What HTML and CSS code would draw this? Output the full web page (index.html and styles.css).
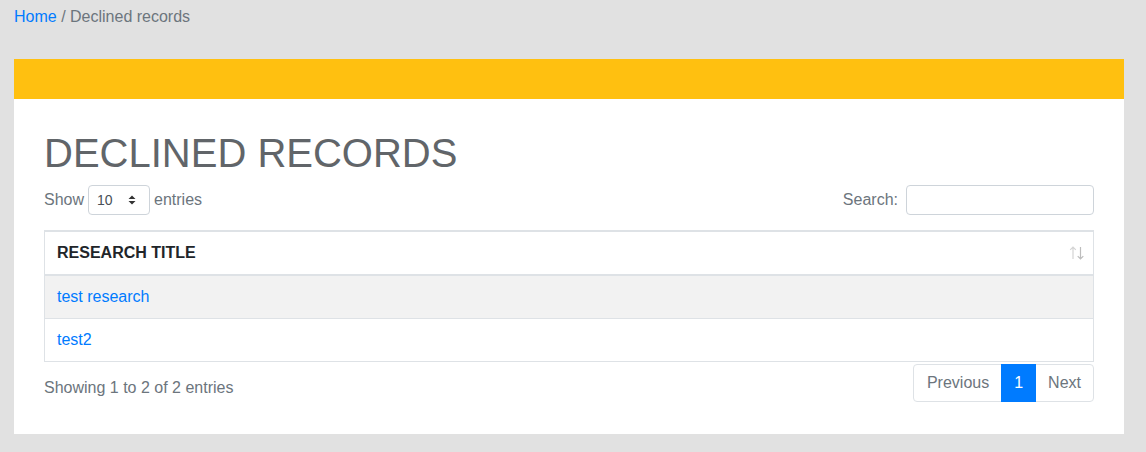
FILE: index.html
```html
<!DOCTYPE html>
<html>
<head>
<meta charset="utf-8">
<link rel="stylesheet" href="styles.css">
</head>
<body>
<div class="page">
  <nav class="crumbs"><a href="#" class="crumb-link">Home</a> / Declined records</nav>
  <section class="card">
    <div class="card-head"></div>
    <div class="card-body">
      <h1 class="title">DECLINED RECORDS</h1>
      <div class="controls">
        <label class="length">Show
          <span class="select"><span class="select-val">10</span>
            <svg class="select-arrows" width="8" height="10" viewBox="0 0 8 10"><path d="M4 0.5 L7.5 4 L0.5 4 Z M4 9.5 L7.5 6 L0.5 6 Z" fill="#333"/></svg>
          </span>
          entries</label>
        <label class="search">Search: <span class="search-input"></span></label>
      </div>
      <table class="grid">
        <thead>
          <tr><th class="th">RESEARCH TITLE
            <svg class="sort" width="16" height="16" viewBox="0 0 16 16"><path d="M4 2 V14 M1.2 4.8 L4 2 L6.8 4.8" stroke="#d4d4d4" stroke-width="1.2" fill="none"/><path d="M11.5 2 V14 M8.7 11.2 L11.5 14 L14.3 11.2" stroke="#bdbdbd" stroke-width="1.2" fill="none"/></svg>
          </th></tr>
        </thead>
        <tbody>
          <tr class="row odd"><td class="td"><a href="#" class="cell-link">test research</a></td></tr>
          <tr class="row"><td class="td"><a href="#" class="cell-link">test2</a></td></tr>
        </tbody>
      </table>
      <div class="footer">
        <div class="info">Showing 1 to 2 of 2 entries</div>
        <ul class="pager">
          <li class="page-item first">Previous</li>
          <li class="page-item active">1</li>
          <li class="page-item last">Next</li>
        </ul>
      </div>
    </div>
  </section>
</div>
</body>
</html>
```
FILE: styles.css
```css
html, body {
  margin: 0;
  padding: 0;
  background: #e1e1e1;
  font-family: "Liberation Sans", Arial, sans-serif;
  font-size: 16px;
  line-height: 24px;
  color: #6c757d;
}
.page {
  padding: 5px 22px 18px 14px;
}
.crumbs {
  color: #6c757d;
  height: 24px;
}
.crumb-link {
  color: #007bff;
  text-decoration: none;
}
.card {
  margin-top: 30px;
  background: #fff;
  width: 1110px;
}
.card-head {
  height: 40px;
  background: #ffc010;
}
.card-body {
  padding: 30px 30px 32px 30px;
}
.title {
  margin: 0 0 8px 0;
  font-size: 40px;
  line-height: 48px;
  font-weight: normal;
  color: #616569;
}
.controls {
  display: flex;
  justify-content: space-between;
  align-items: center;
  height: 30px;
  margin-bottom: 15px;
}
.length, .search {
  display: flex;
  align-items: center;
  gap: 4px;
  color: #6c757d;
}
.search {
  gap: 8px;
}
.select {
  box-sizing: border-box;
  width: 62px;
  height: 30px;
  border: 1px solid #ced4da;
  border-radius: 4px;
  display: flex;
  align-items: center;
  justify-content: space-between;
  padding: 0 13px 0 8px;
  font-size: 14px;
  color: #495057;
}
.select-arrows {
  display: block;
}
.search-input {
  box-sizing: border-box;
  width: 188px;
  height: 30px;
  border: 1px solid #ced4da;
  border-radius: 4px;
  display: block;
}
.grid {
  width: 100%;
  border-collapse: collapse;
}
.th {
  position: relative;
  text-align: left;
  padding: 9px 12px;
  border: 1px solid #dee2e6;
  border-top-width: 2px;
  border-bottom-width: 2px;
  color: #212529;
  font-weight: bold;
}
.sort {
  position: absolute;
  right: 8px;
  top: 13px;
}
.td {
  padding: 9px 12px;
  border: 1px solid #dee2e6;
  border-top: 0;
}
.odd {
  background: #f2f2f2;
}
.cell-link {
  color: #007bff;
  text-decoration: none;
}
.footer {
  display: flex;
  justify-content: space-between;
  align-items: flex-start;
}
.info {
  padding-top: 14px;
  color: #6c757d;
}
.pager {
  display: flex;
  list-style: none;
  margin: 2px 0 0 0;
  padding: 0;
}
.page-item {
  padding: 8px 12px;
  line-height: 20px;
  border: 1px solid #dee2e6;
  margin-left: -1px;
  color: #6c757d;
}
.page-item.first {
  margin-left: 0;
  padding-left: 13px;
  border-radius: 4px 0 0 4px;
}
.page-item.last {
  border-radius: 0 4px 4px 0;
}
.page-item.active {
  background: #007bff;
  border-color: #007bff;
  color: #fff;
  position: relative;
}
```
